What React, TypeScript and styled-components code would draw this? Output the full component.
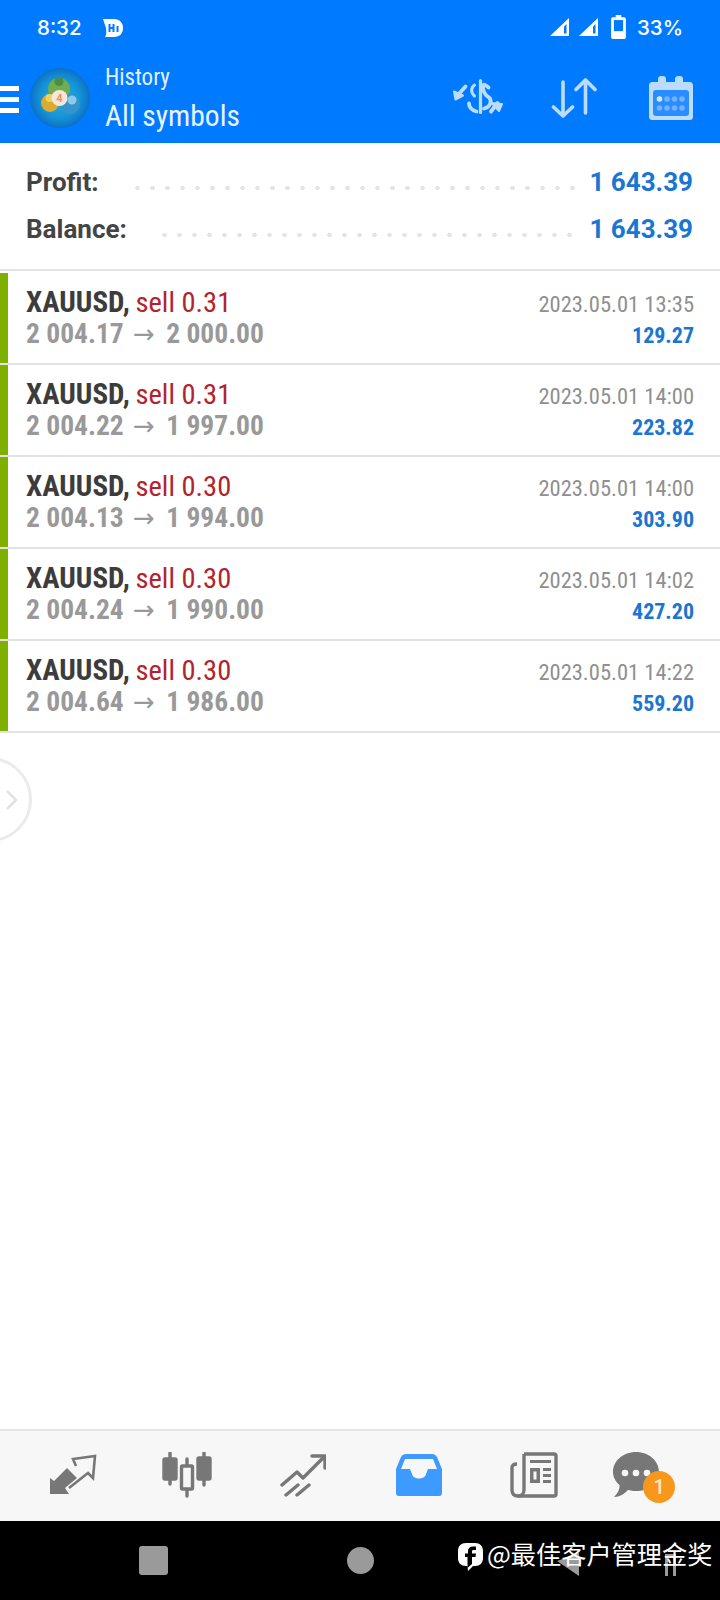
import React from 'react';
import styled, { createGlobalStyle } from 'styled-components';

const GlobalStyle = createGlobalStyle`
    html, body {
        margin: 0;
        padding: 0;
        background: #fff;
    }
    * {
        box-sizing: border-box;
    }
`;

const condensed = `"Roboto Condensed", "Liberation Sans Narrow", Roboto, sans-serif`;

const Page = styled.div`
    position: relative;
    width: 720px;
    height: 1600px;
    display: flex;
    flex-direction: column;
    overflow: hidden;
    background: #fff;
    font-family: Roboto, sans-serif;
`;

const Header = styled.header`
    height: 143px;
    background: #007bff;
    color: #fff;
    display: flex;
    flex-direction: column;
    flex: none;
`;

const StatusBar = styled.div`
    height: 52px;
    padding: 2px 37px 0;
    display: flex;
    align-items: center;
    justify-content: space-between;
    font-size: 20.500px;
    font-family: Inter, Roboto, sans-serif;
    font-weight: 500;
`;

const StatusGroup = styled.div`
    display: flex;
    align-items: center;
    gap: ${({ $gap }: { $gap: number }) => $gap}px;
`;

const BatteryWrap = styled.span`
    display: flex;
    margin: 0 1px 0 3px;
`;

const Toolbar = styled.div`
    flex: 1;
    display: flex;
    align-items: center;
`;

const Hamburger = styled.div`
    width: 19px;
    height: 27px;
    margin: 4px 11px 0 0;
    display: flex;
    flex-direction: column;
    justify-content: space-between;
    & > span {
        height: 5px;
        background: #fff;
    }
`;

const TitleBlock = styled.div`
    margin-left: 15px;
    padding-top: 4px;
    display: flex;
    flex-direction: column;
    font-family: ${condensed};
    flex: 1;
`;

const SubTitle = styled.div`
    font-size: 23px;
    line-height: 30px;
    color: #e3f0ff;
`;

const MainTitle = styled.div`
    margin-top: 2px;
    font-size: 29.500px;
    line-height: 42px;
    color: #e8f3ff;
`;

const ToolActions = styled.div`
    display: flex;
    align-items: center;
    gap: 48px;
    padding-right: 27px;
    color: #bcdcff;
`;

const Summary = styled.section`
    height: 128px;
    padding: 15px 27px 0 26px;
    border-bottom: 2px solid #e2e2e2;
    flex: none;
`;

const SummaryRow = styled.div`
    height: 47px;
    display: flex;
    align-items: center;
`;

const SummaryLabel = styled.span`
    font-size: 26px;
    font-weight: 700;
    color: #444;
`;

const Dots = styled.span`
    flex: 1;
    height: 4px;
    margin: 12px 10px 0 ${({ $left }: { $left: number }) => $left}px;
    background-image: radial-gradient(circle, #e4e4e4 2px, transparent 2.500px);
    background-size: 15px 4px;
    background-repeat: repeat-x;
    background-position: left center;
`;

const SummaryValue = styled.span`
    font-size: 26px;
    font-weight: 700;
    color: #1976d2;
`;

const DealList = styled.div`
    margin-top: 2px;
    flex: none;
`;

const Deal = styled.div`
    height: 92px;
    padding-right: 26px;
    border-bottom: 2px solid #e2e2e2;
    display: flex;
    font-family: ${condensed};
`;

const DealMarker = styled.div`
    width: 8px;
    margin-right: 18px;
    background: #7fb000;
`;

const DealLeft = styled.div`
    flex: 1;
    padding-top: 13px;
`;

const DealRight = styled.div`
    padding-top: 15px;
    text-align: right;
`;

const Line = styled.div`
    height: 32px;
    line-height: 32px;
    white-space: nowrap;
`;

const Symbol = styled.span`
    font-size: 29px;
    font-weight: 700;
    color: #3c3c3c;
`;

const Side = styled.span`
    margin-left: 2px;
    font-size: 28.500px;
    color: #b3232e;
`;

const Prices = styled.span`
    font-size: 27.500px;
    font-weight: 700;
    color: #999;
`;

const Arrow = styled.span`
    font-size: 26px;
    font-weight: 400;
    margin: 0 5px 0 3px;
    font-family: "DejaVu Sans", sans-serif;
`;

const DealDate = styled.span`
    font-size: 22.500px;
    color: #8f8f8f;
`;

const DealProfit = styled.span`
    font-size: 22px;
    font-weight: 700;
    color: #1976d2;
`;

const SideHandle = styled.div`
    position: absolute;
    left: -53px;
    top: 757px;
    width: 85px;
    height: 85px;
    border-radius: 50%;
    border: 3px solid #ebebeb;
    display: flex;
    align-items: center;
    justify-content: flex-end;
    padding-right: 11px;
    color: #e2e2e2;
`;

const Spacer = styled.div`
    flex: 1;
`;

const BottomNav = styled.nav`
    height: 92px;
    flex: none;
    padding: 0 12px 2px 14px;
    background: #f7f7f7;
    border-top: 2px solid #e4e4e4;
    display: grid;
    grid-template-columns: repeat(6, 1fr);
    align-items: center;
    justify-items: center;
`;

const NavItem = styled.div<{ $active?: boolean; $shift?: number }>`
    position: relative;
    width: 52px;
    height: 52px;
    margin-right: ${({ $shift }) => $shift ?? 0}px;
    display: flex;
    align-items: center;
    justify-content: center;
    color: ${({ $active }) => ($active ? '#3d9bff' : '#777')};
`;

const Badge = styled.span`
    position: absolute;
    right: -13px;
    bottom: -2px;
    width: 32px;
    height: 32px;
    border-radius: 50%;
    background: #f7981d;
    color: #ffe9c9;
    font-size: 20px;
    font-weight: 500;
    display: flex;
    align-items: center;
    justify-content: center;
`;

const SystemBar = styled.div`
    height: 79px;
    flex: none;
    background: #000;
    display: flex;
    align-items: center;
    position: relative;
`;

const SysSquare = styled.div`
    position: absolute;
    left: 139px;
    top: 25px;
    width: 29px;
    height: 29px;
    border-radius: 3px;
    background: #9a9a9a;
`;

const SysCircle = styled.div`
    position: absolute;
    left: 347px;
    top: 26px;
    width: 27px;
    height: 27px;
    border-radius: 50%;
    background: #9a9a9a;
`;

const SysBack = styled.svg`
    position: absolute;
    left: 557px;
    top: 32px;
`;

const SysRecent = styled.svg`
    position: absolute;
    left: 665px;
    top: 33px;
`;

const Watermark = styled.div`
    position: absolute;
    left: 458px;
    top: 13px;
    display: flex;
    align-items: center;
    gap: 4px;
    color: #fff;
    font-family: "Noto Sans CJK SC", sans-serif;
    font-size: 25.200px;
    line-height: 36px;
    & > svg {
        margin-top: 9px;
    }
`;

const LogoText = styled.text`
    font-family: Roboto, sans-serif;
    font-weight: 700;
    font-size: 11px;
    fill: #ee8f5a;
`;

const deals = [
    { volume: '0.31', open: '2 004.17', close: '2 000.00', time: '2023.05.01 13:35', profit: '129.27' },
    { volume: '0.31', open: '2 004.22', close: '1 997.00', time: '2023.05.01 14:00', profit: '223.82' },
    { volume: '0.30', open: '2 004.13', close: '1 994.00', time: '2023.05.01 14:00', profit: '303.90' },
    { volume: '0.30', open: '2 004.24', close: '1 990.00', time: '2023.05.01 14:02', profit: '427.20' },
    { volume: '0.30', open: '2 004.64', close: '1 986.00', time: '2023.05.01 14:22', profit: '559.20' },
];

const SignalIcon = () => (
    <svg width="19" height="18" viewBox="0 0 19 18">
        <path d="M19 0V18H0Z" fill="#fff" />
        <path d="M16.500 6V15.500H14V8.500Z" fill="#007bff" />
    </svg>
);

const BatteryIcon = () => (
    <svg width="15" height="24" viewBox="0 0 16 26">
        <path d="M5 0H11V2.500H14C15 2.500 16 3.500 16 4.500V24C16 25 15 26 14 26H2C1 26 0 25 0 24V4.500C0 3.500 1 2.500 2 2.500H5Z" fill="#fff" />
        <rect x="3" y="5.500" width="10" height="12" fill="#007bff" />
    </svg>
);

const HiIcon = () => (
    <svg width="20" height="19" viewBox="0 0 20 19">
        <path d="M0 1H11C17 1 20 5 20 10C20 15 17 19 11 19H2C3.500 17 3.500 14 3 10Z" fill="#fff" />
        <rect x="5.500" y="6" width="2" height="8" fill="#007bff" />
        <rect x="9.500" y="6" width="2" height="8" fill="#007bff" />
        <rect x="6.500" y="9" width="4" height="2" fill="#007bff" />
        <rect x="13.500" y="8" width="2" height="6" fill="#007bff" />
    </svg>
);

const Logo = () => (
    <svg width="60" height="60" viewBox="0 0 60 60">
        <defs>
            <radialGradient id="logoBg" cx="50%" cy="50%" r="52%">
                <stop offset="0%" stopColor="#2cb0ea" />
                <stop offset="65%" stopColor="#1492d6" />
                <stop offset="100%" stopColor="#0b6cc4" />
            </radialGradient>
        </defs>
        <circle cx="30" cy="30" r="30" fill="url(#logoBg)" />
        <circle cx="29" cy="21" r="11" fill="#6fae4f" />
        <circle cx="29" cy="13.500" r="4.500" fill="#4c8c45" />
        <circle cx="20" cy="35" r="9" fill="#dcaa2e" />
        <circle cx="19.500" cy="30" r="4" fill="#efd163" />
        <circle cx="40" cy="36" r="10" fill="#3594cc" />
        <circle cx="42" cy="32" r="4.500" fill="#8ccbe8" />
        <circle cx="29.500" cy="30" r="8" fill="#f6e7dc" />
        <LogoText x="29.500" y="34" textAnchor="middle">4</LogoText>
    </svg>
);

const CurrencyIcon = () => (
    <svg width="50" height="44" viewBox="0 0 50 44" fill="none" stroke="currentColor" strokeLinecap="round">
        <path d="M27.500 4.500V36.500" strokeWidth="3.200" />
        <path d="M35.500 11.500C33 8.500 30.500 8.500 30.500 9C29 12 31 19 36 21.500C39 24 38 31 31 32.500" strokeWidth="3.800" />
        <path d="M21.500 9C18 11.500 17.500 16.500 21.500 20" strokeWidth="3" />
        <path d="M16 27.500C16 31 19 34.500 23.500 35.500" strokeWidth="3.800" />
        <path d="M12.500 10.500L4 20" strokeWidth="3.800" />
        <path d="M1 15.500L2.500 23.500L10 19.500Z" fill="currentColor" strokeWidth="2" strokeLinejoin="round" />
        <path d="M38 35.500L44.500 27" strokeWidth="3.800" />
        <path d="M38.500 27L49 28L46 35Z" fill="currentColor" strokeWidth="2" strokeLinejoin="round" />
    </svg>
);

const SortIcon = () => (
    <svg width="50" height="40" viewBox="0 0 50 40" fill="none" stroke="currentColor" strokeWidth="3.600" strokeLinecap="round" strokeLinejoin="round">
        <path d="M12 4V38M2.500 29L12 38L21.500 29" />
        <path d="M34.500 35V2M25 11.500L34.500 2L44 11.500" />
    </svg>
);

const CalendarIcon = () => (
    <svg width="44" height="44" viewBox="0 0 44 44">
        <path d="M3 6H9V3C9 1 10.500 0 12 0H14C16 0 17 1 17 3V6H26V3C26 1 27.500 0 29 0H31C33 0 34 1 34 3V6H41C42.500 6 44 7.500 44 9V41C44 43 42.500 44 41 44H3C1.500 44 0 43 0 41V9C0 7.500 1.500 6 3 6Z" fill="currentColor" />
        <rect x="4" y="14" width="36" height="26" rx="3" fill="#2a8dff" />
        {[10.500, 18, 25.500, 33].map((cx, col) => (
            <React.Fragment key={cx}>
                <circle cx={cx} cy="23" r="2.800" fill={col === 0 ? '#d3e8ff' : '#70b2ff'} />
                <circle cx={cx} cy="32" r="2.800" fill="#70b2ff" />
            </React.Fragment>
        ))}
    </svg>
);

const TradeIcon = () => (
    <svg width="50" height="44" viewBox="0 0 50 44" fill="none">
        <path d="M3 41V25L7 28L20 15L30 25L18 35L22 41Z" fill="currentColor" />
        <path d="M29 13L26 6L48 3L46 25L41 20L22 35" stroke="currentColor" strokeWidth="2.600" />
    </svg>
);

const CandlesIcon = () => (
    <svg width="50" height="46" viewBox="0 0 50 46" fill="none" stroke="currentColor" strokeWidth="3.400" strokeLinecap="round">
        <path d="M8 1V32M25 7V44M42 1V33" />
        <rect x="2" y="7" width="12" height="20" rx="1" fill="currentColor" />
        <rect x="19.500" y="14" width="11" height="23" rx="1" fill="#f7f7f7" />
        <rect x="36" y="6" width="12" height="21" rx="1" fill="currentColor" />
    </svg>
);

const ChartIcon = () => (
    <svg width="46" height="44" viewBox="0 0 46 44" fill="none" stroke="currentColor" strokeWidth="3.400" strokeLinecap="round" strokeLinejoin="round">
        <path d="M2 32L17 19L23 25L44 4" />
        <path d="M32 3H45V15" />
        <path d="M6 42L18 32M17 42L29 32" />
    </svg>
);

const InboxIcon = () => (
    <svg width="46" height="42" viewBox="0 0 46 42">
        <path d="M10 0H36C38 0 40 1 41 3L46 15V39C46 41 45 42 43 42H3C1 42 0 41 0 39V15L5 3C6 1 8 0 10 0ZM9 5L5 15H14L16 20C17 26 29 26 30 20L32 15H41L37 5Z" fill="currentColor" fillRule="evenodd" />
    </svg>
);

const NewsIcon = () => (
    <svg width="48" height="46" viewBox="0 0 48 46">
        <path d="M14 2H44C45.500 2 46 3 46 4V42C46 43.500 45 44 44 44H8" fill="none" stroke="currentColor" strokeWidth="3.400" />
        <path d="M14 2V38C14 42 11 44 8 44C4 44 2 42 2 38V16C2 13 4 12 7 12" fill="none" stroke="currentColor" strokeWidth="3.400" />
        <rect x="20" y="8" width="21" height="3" fill="currentColor" />
        <path d="M20 16H30V31H20ZM23.500 19.500V27.500H26.500V19.500Z" fill="currentColor" fillRule="evenodd" />
        <rect x="33" y="16" width="8" height="3" fill="currentColor" />
        <rect x="33" y="22" width="8" height="3" fill="currentColor" />
        <rect x="33" y="28" width="8" height="3" fill="currentColor" />
    </svg>
);

const ChatIcon = () => (
    <svg width="46" height="46" viewBox="0 0 46 46">
        <path d="M23 0C36 0 46 9 46 20C46 31 36 39 23 39C20 39 17.500 38.500 15 38C11 42 7 45 1 45C5 41 7 37 6.500 33C2.500 29.500 0 25 0 20C0 9 10 0 23 0Z" fill="currentColor" />
        <circle cx="12" cy="21" r="3.300" fill="#f7f7f7" />
        <circle cx="23" cy="21" r="3.300" fill="#f7f7f7" />
        <circle cx="34" cy="21" r="3.300" fill="#f7f7f7" />
    </svg>
);

const FacebookMark = () => (
    <svg width="25" height="28" viewBox="0 0 25 28">
        <path d="M8 0H17C22 0 25 3 25 8V15C25 20 22 23 17 23H15L10 28L9.500 23H8C3 23 0 20 0 15V8C0 3 3 0 8 0Z" fill="#fff" />
        <path d="M9.500 25V14H7V10.500H10V8C10 5 12 3.500 15 3.500H18V7H15.500C14.500 7 14 7.500 14 8.500V10.500H18L17.500 14H14V21Z" fill="#000" />
    </svg>
);

const App = () => (
    <Page>
        <GlobalStyle />
        <Header>
            <StatusBar>
                <StatusGroup $gap={21}>
                    <span>8:32</span>
                    <HiIcon />
                </StatusGroup>
                <StatusGroup $gap={10}>
                    <SignalIcon />
                    <SignalIcon />
                    <BatteryWrap>
                        <BatteryIcon />
                    </BatteryWrap>
                    <span>33%</span>
                </StatusGroup>
            </StatusBar>
            <Toolbar>
                <Hamburger>
                    <span />
                    <span />
                    <span />
                </Hamburger>
                <Logo />
                <TitleBlock>
                    <SubTitle>History</SubTitle>
                    <MainTitle>All symbols</MainTitle>
                </TitleBlock>
                <ToolActions>
                    <CurrencyIcon />
                    <SortIcon />
                    <CalendarIcon />
                </ToolActions>
            </Toolbar>
        </Header>
        <Summary>
            <SummaryRow>
                <SummaryLabel>Profit:</SummaryLabel>
                <Dots $left={31} />
                <SummaryValue>1 643.39</SummaryValue>
            </SummaryRow>
            <SummaryRow>
                <SummaryLabel>Balance:</SummaryLabel>
                <Dots $left={30} />
                <SummaryValue>1 643.39</SummaryValue>
            </SummaryRow>
        </Summary>
        <DealList>
            {deals.map((deal) => (
                <Deal key={deal.profit}>
                    <DealMarker />
                    <DealLeft>
                        <Line>
                            <Symbol>XAUUSD,</Symbol> <Side>sell {deal.volume}</Side>
                        </Line>
                        <Line>
                            <Prices>
                                {deal.open} <Arrow>→</Arrow> {deal.close}
                            </Prices>
                        </Line>
                    </DealLeft>
                    <DealRight>
                        <Line>
                            <DealDate>{deal.time}</DealDate>
                        </Line>
                        <Line>
                            <DealProfit>{deal.profit}</DealProfit>
                        </Line>
                    </DealRight>
                </Deal>
            ))}
        </DealList>
        <SideHandle>
            <svg width="13" height="22" viewBox="0 0 13 22" fill="none" stroke="currentColor" strokeWidth="2.500">
                <path d="M2 2L11 11L2 20" />
            </svg>
        </SideHandle>
        <Spacer />
        <BottomNav>
            <NavItem><TradeIcon /></NavItem>
            <NavItem><CandlesIcon /></NavItem>
            <NavItem><ChartIcon /></NavItem>
            <NavItem $active><InboxIcon /></NavItem>
            <NavItem><NewsIcon /></NavItem>
            <NavItem $shift={28}>
                <ChatIcon />
                <Badge>1</Badge>
            </NavItem>
        </BottomNav>
        <SystemBar>
            <SysSquare />
            <SysCircle />
            <SysBack width="22" height="23" viewBox="0 0 22 23">
                <path d="M0 8L22 0V23Z" fill="#9a9a9a" />
            </SysBack>
            <SysRecent width="11" height="22" viewBox="0 0 11 22">
                <path d="M0 0H11V22H8V4H3V22H0Z" fill="#9a9a9a" />
            </SysRecent>
            <Watermark>
                <FacebookMark />
                <span>@最佳客户管理金奖</span>
            </Watermark>
        </SystemBar>
    </Page>
);

export default App;
